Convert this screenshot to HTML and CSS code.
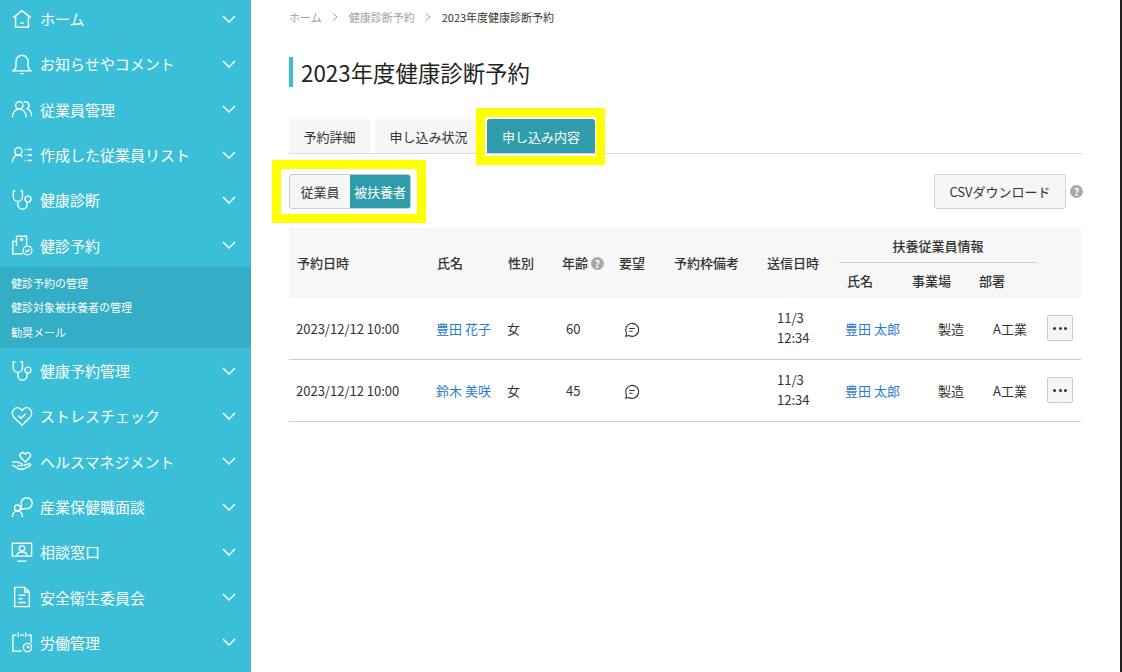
FILE: index.html
```html
<!DOCTYPE html>
<html lang="ja">
<head>
    <meta charset="UTF-8">
    <title>2023年度健康診断予約</title>
    <link rel="stylesheet" href="styles.css">
</head>
<body>
    <div class="app">
        <nav class="sidebar">
            <a class="nav-item">
                <svg class="nav-icon" viewBox="0 0 24 24"><path d="M2.500 10.500 12 3l9.500 7.500M5 9v12h14V9M10 16.500h4"/></svg>
                <span>ホーム</span>
                <svg class="chevron" viewBox="0 0 14 8"><path d="M1 1l6 6 6-6"/></svg>
            </a>
            <a class="nav-item">
                <svg class="nav-icon" viewBox="0 0 24 24"><path d="M2.500 19.500c2-1.500 3-3 3-6V9a6.500 6.500 0 0 1 13 0v4.500c0 3 1 4.500 3 6zM10 22.500h4"/></svg>
                <span>お知らせやコメント</span>
                <svg class="chevron" viewBox="0 0 14 8"><path d="M1 1l6 6 6-6"/></svg>
            </a>
            <a class="nav-item">
                <svg class="nav-icon" viewBox="0 0 24 24"><circle cx="9" cy="8" r="4"/><path d="M1.500 21c0-5 3-9 7.500-9s7.500 4 7.500 9M14 4.500a3.700 3.700 0 1 1 3.500 7c3 1 5 4.500 5 8.500"/></svg>
                <span>従業員管理</span>
                <svg class="chevron" viewBox="0 0 14 8"><path d="M1 1l6 6 6-6"/></svg>
            </a>
            <a class="nav-item">
                <svg class="nav-icon" viewBox="0 0 24 24"><circle cx="8" cy="8" r="4"/><path d="M1.500 20c0-4.500 2.500-8 6.500-8 2 0 3.500.8 4.500 2M15 6h1M18 6h5M15 12h1M18 12h5M15 18h1M18 18h5"/></svg>
                <span>作成した従業員リスト</span>
                <svg class="chevron" viewBox="0 0 14 8"><path d="M1 1l6 6 6-6"/></svg>
            </a>
            <a class="nav-item">
                <svg class="nav-icon" viewBox="0 0 24 24"><path d="M5 2H2.500v6.500c0 3 2.500 5 5 5s5-2 5-5V2H10M7.500 13.500V17a5 5 0 0 0 10 0v-2.500"/><circle cx="18.500" cy="11" r="3.200"/></svg>
                <span>健康診断</span>
                <svg class="chevron" viewBox="0 0 14 8"><path d="M1 1l6 6 6-6"/></svg>
            </a>
            <a class="nav-item">
                <svg class="nav-icon" viewBox="0 0 24 24"><path d="M12.500 21.500H2V8h4V2.500h11V12M6 8v5M9.500 6h4M11.500 4v4M4.500 13h.1M4.500 17h.1M9 12h.1M9 16h.1"/><circle cx="18" cy="18" r="4.800"/><path d="M15.800 18l1.600 1.600 2.800-3"/></svg>
                <span>健診予約</span>
                <svg class="chevron" viewBox="0 0 14 8"><path d="M1 1l6 6 6-6"/></svg>
            </a>
            <div class="subnav">
                <a>健診予約の管理</a>
                <a>健診対象被扶養者の管理</a>
                <a>勧奨メール</a>
            </div>
            <a class="nav-item">
                <svg class="nav-icon" viewBox="0 0 24 24"><path d="M5 2H2.500v6.500c0 3 2.500 5 5 5s5-2 5-5V2H10M7.500 13.500V17a5 5 0 0 0 10 0v-2.500"/><circle cx="18.500" cy="11" r="3.200"/></svg>
                <span>健康予約管理</span>
                <svg class="chevron" viewBox="0 0 14 8"><path d="M1 1l6 6 6-6"/></svg>
            </a>
            <a class="nav-item">
                <svg class="nav-icon" viewBox="0 0 24 24"><path d="M12 22 3 13C-1 8 4 1 9 3.500c1.500.7 2.300 1.700 3 2.700.7-1 1.500-2 3-2.700C20 1 25 8 21 13z"/><path d="M8 11.500l3 3 5-5"/></svg>
                <span>ストレスチェック</span>
                <svg class="chevron" viewBox="0 0 14 8"><path d="M1 1l6 6 6-6"/></svg>
            </a>
            <a class="nav-item">
                <svg class="nav-icon" viewBox="0 0 24 24"><path d="M15.500 13 10.500 8c-2.500-3 1.500-6.500 4-4.500l1 1 1-1c2.500-2 6.500 1.500 4 4.500zM1 13h5l5 1.500c1.500.5 1 2.500-.5 2.500H7M1 17h2l6 4h4l8-4c1-1 0-2.500-1.500-2L13 17"/></svg>
                <span>ヘルスマネジメント</span>
                <svg class="chevron" viewBox="0 0 14 8"><path d="M1 1l6 6 6-6"/></svg>
            </a>
            <a class="nav-item">
                <svg class="nav-icon" viewBox="0 0 24 24"><circle cx="7" cy="13" r="3.200"/><path d="M1.500 23c0-4 2-6.500 5.500-6.500s5.500 2.500 5.500 6.500M11.500 10A6 6 0 1 1 15 13.500l-4 1.500z"/><path d="M14.500 8h.1M17 8h.1M19.500 8h.1"/></svg>
                <span>産業保健職面談</span>
                <svg class="chevron" viewBox="0 0 14 8"><path d="M1 1l6 6 6-6"/></svg>
            </a>
            <a class="nav-item">
                <svg class="nav-icon" viewBox="0 0 24 24"><path d="M1.500 2.500h21v14h-21zM7 22h10"/><circle cx="12" cy="8" r="3"/><path d="M6.500 16.500c0-3 2.500-4.500 5.500-4.500s5.500 1.500 5.500 4.500"/></svg>
                <span>相談窓口</span>
                <svg class="chevron" viewBox="0 0 14 8"><path d="M1 1l6 6 6-6"/></svg>
            </a>
            <a class="nav-item">
                <svg class="nav-icon" viewBox="0 0 24 24"><path d="M4 1.500h11l5 5v16H4zM15 1.500v5h5M8 10h8M8 14h5M8 18h8"/></svg>
                <span>安全衛生委員会</span>
                <svg class="chevron" viewBox="0 0 14 8"><path d="M1 1l6 6 6-6"/></svg>
            </a>
            <a class="nav-item">
                <svg class="nav-icon" viewBox="0 0 24 24"><path d="M12 22H2V4.500h4M10 4.500h4M18 4.500h4V13M8 1.500v5M16 1.500v5"/><circle cx="18" cy="18" r="4.500"/><path d="M18 15.500V18h2.500"/></svg>
                <span>労働管理</span>
                <svg class="chevron" viewBox="0 0 14 8"><path d="M1 1l6 6 6-6"/></svg>
            </a>
        </nav>

        <main class="content">
            <div class="breadcrumb">
                <a>ホーム</a>
                <svg class="crumb-sep" viewBox="0 0 6 8"><path d="M1 .5 5 4 1 7.500"/></svg>
                <a>健康診断予約</a>
                <svg class="crumb-sep" viewBox="0 0 6 8"><path d="M1 .5 5 4 1 7.500"/></svg>
                <span>2023年度健康診断予約</span>
            </div>
            <h1 class="page-title">2023年度健康診断予約</h1>

            <div class="tabs">
                <a class="tab">予約詳細</a>
                <a class="tab">申し込み状況</a>
                <a class="tab tab--active">申し込み内容</a>
            </div>

            <div class="toolbar">
                <div class="switch">
                    <a class="switch__btn">従業員</a>
                    <a class="switch__btn switch__btn--on">被扶養者</a>
                </div>
                <div class="toolbar__right">
                    <button class="csv-btn">CSVダウンロード</button>
                    <span class="help help--big">?</span>
                </div>
            </div>

            <table class="list">
                <colgroup>
                    <col class="c-date"><col class="c-name"><col class="c-sex"><col class="c-age"><col class="c-req">
                    <col class="c-note"><col class="c-sent"><col class="c-ename"><col class="c-site"><col class="c-dept"><col class="c-more">
                </colgroup>
                <thead>
                    <tr class="head-top">
                        <th rowspan="2" class="span-th">予約日時</th>
                        <th rowspan="2" class="span-th">氏名</th>
                        <th rowspan="2" class="span-th">性別</th>
                        <th rowspan="2" class="span-th">年齢 <span class="help">?</span></th>
                        <th rowspan="2" class="span-th">要望</th>
                        <th rowspan="2" class="span-th">予約枠備考</th>
                        <th rowspan="2" class="span-th">送信日時</th>
                        <th colspan="3" class="group">扶養従業員情報</th>
                        <th rowspan="2"></th>
                    </tr>
                    <tr class="head-sub">
                        <th>氏名</th>
                        <th>事業場</th>
                        <th>部署</th>
                    </tr>
                </thead>
                <tbody>
                    <tr>
                        <td>2023/12/12 10:00</td>
                        <td><a class="link">豊田 花子</a></td>
                        <td>女</td>
                        <td class="num">60</td>
                        <td class="req"><svg class="comment" viewBox="0 0 16 16"><path d="M1.700 14.300l.9-3A6.500 6.500 0 1 1 4.900 13.500zM5.200 6.500h5.600M5.200 9.200h3.400"/></svg></td>
                        <td></td>
                        <td class="sent">11/3<br>12:34</td>
                        <td class="ename"><a class="link">豊田 太郎</a></td>
                        <td class="site">製造</td>
                        <td class="dept">A工業</td>
                        <td class="more"><button class="more-btn"><b></b><b></b><b></b></button></td>
                    </tr>
                    <tr>
                        <td>2023/12/12 10:00</td>
                        <td><a class="link">鈴木 美咲</a></td>
                        <td>女</td>
                        <td class="num">45</td>
                        <td class="req"><svg class="comment" viewBox="0 0 16 16"><path d="M1.700 14.300l.9-3A6.500 6.500 0 1 1 4.900 13.500zM5.200 6.500h5.600M5.200 9.200h3.400"/></svg></td>
                        <td></td>
                        <td class="sent">11/3<br>12:34</td>
                        <td class="ename"><a class="link">豊田 太郎</a></td>
                        <td class="site">製造</td>
                        <td class="dept">A工業</td>
                        <td class="more"><button class="more-btn"><b></b><b></b><b></b></button></td>
                    </tr>
                </tbody>
            </table>
        </main>
    </div>
</body>
</html>
```

FILE: styles.css
```css
* {
    box-sizing: border-box;
}

html, body {
    height: 100%;
}

body {
    margin: 0;
    background: #fff;
    color: #333;
    font-family: "Noto Sans CJK JP", "Noto Sans", sans-serif;
    overflow: hidden;
}

.app {
    display: flex;
    height: 672px;
    border-right: 2px solid #222;
}

/* sidebar */
.sidebar {
    width: 251px;
    flex: none;
    background: #3bbfd9;
    color: #fff;
    overflow: hidden;
}

.nav-item {
    display: flex;
    align-items: center;
    height: 45.3px;
    padding: 0 15px 0 11px;
    font-size: 15px;
}

.nav-item:first-child {
    margin-top: -4px;
}

.nav-item span {
    flex: 1;
    margin-left: 7px;
    white-space: nowrap;
}

.nav-icon {
    width: 22px;
    height: 22px;
    flex: none;
    fill: none;
    stroke: #fff;
    stroke-width: 1.500;
}

.chevron {
    width: 14px;
    height: 8px;
    flex: none;
    fill: none;
    stroke: #fff;
    stroke-width: 1.500;
}

.subnav {
    display: flex;
    flex-direction: column;
    height: 81px;
    margin-top: -0.800px;
    padding: 4px 0 0 11px;
    background: #33aec6;
    font-size: 11px;
}

.subnav a {
    height: 24.500px;
    line-height: 24.500px;
}

/* main */
.content {
    flex: 1;
    padding: 0 38px;
    min-width: 0;
}

.breadcrumb {
    display: flex;
    align-items: center;
    height: 34px;
    font-size: 11px;
    color: #a0a0a0;
}

.crumb-sep {
    width: 6px;
    height: 8px;
    margin: 0 10.500px;
    fill: none;
    stroke: #a0a0a0;
    stroke-width: 1;
}

.breadcrumb span {
    color: #333;
}

.page-title {
    margin: 23px 0 0;
    padding-left: 8px;
    border-left: 4px solid #3bbfd9;
    height: 30px;
    line-height: 30px;
    font-size: 22.400px;
    font-weight: 400;
    color: #222;
}

.tabs {
    display: flex;
    gap: 5px;
    margin-top: 32px;
    height: 35px;
    width: 794px;
    border-bottom: 1px solid #ddd;
}

.tab {
    display: flex;
    align-items: center;
    justify-content: center;
    width: 81px;
    height: 34px;
    background: #f6f6f6;
    border-radius: 3px 3px 0 0;
    font-size: 13px;
}

.tab:nth-child(2) {
    width: 107px;
}

.tab--active {
    position: relative;
    width: 108px;
    background: #2f9cab;
    color: #fff;
}

/* yellow note frames laid over the page */
.tab--active::after,
.switch::after {
    content: "";
    position: absolute;
    border: 9px solid #ffff00;
    pointer-events: none;
}

.tab--active::after {
    inset: -11px -10px -12px -11px;
}

.switch::after {
    inset: -15px -16px -15px -18px;
}

.toolbar {
    display: flex;
    justify-content: space-between;
    align-items: center;
    width: 794px;
    margin-top: 19px;
    height: 36px;
}

.switch {
    position: relative;
    display: flex;
    width: 122px;
    height: 35px;
    border: 1px solid #ccc;
    border-radius: 3px;
    background: #f6f6f6;
    font-size: 13px;
}

.switch__btn {
    display: flex;
    align-items: center;
    justify-content: center;
    flex: 1;
}

.switch__btn--on {
    flex: none;
    width: 60px;
    background: #2f9cab;
    color: #fff;
    border-radius: 0 2px 2px 0;
}

.toolbar__right {
    display: flex;
    align-items: center;
    gap: 4px;
}

.csv-btn {
    width: 132px;
    height: 35px;
    border: 1px solid #d4d4d4;
    border-radius: 3px;
    background: #f6f6f6;
    color: #333;
    font-family: inherit;
    font-size: 13px;
    padding: 0;
}

.help {
    display: inline-flex;
    align-items: center;
    justify-content: center;
    width: 13px;
    height: 13px;
    border-radius: 50%;
    background: #a9a9a9;
    color: #fff;
    font-size: 10px;
    font-weight: 700;
    vertical-align: 0;
}

/* table */
.list {
    width: 792px;
    margin-top: 19px;
    border-collapse: collapse;
    table-layout: fixed;
    font-size: 13px;
}

.c-date { width: 140px; }
.c-name { width: 71px; }
.c-sex { width: 54px; }
.c-age { width: 57px; }
.c-req { width: 55px; }
.c-note { width: 93px; }
.c-sent { width: 80px; }
.c-ename { width: 65px; }
.c-site { width: 67px; }
.c-dept { width: 66px; }
.c-more { width: 44px; }

.list th {
    padding: 0 0 0 8px;
    background: #f7f7f7;
    font-weight: 500;
    text-align: left;
    white-space: nowrap;
}

.list th.span-th {
    padding-bottom: 2px;
}

.head-top,
.head-sub {
    height: 35px;
}

.list th.group {
    padding: 0;
    text-align: center;
    background-image: linear-gradient(#ccc, #ccc);
    background-size: 198px 1px;
    background-position: left bottom;
    background-repeat: no-repeat;
}

.list td {
    height: 62px;
    padding: 0 0 0 7px;
    border-bottom: 1px solid #ccc;
    white-space: nowrap;
}

.list tbody tr:first-child td {
    height: 61px;
}

.link {
    color: #2a7ccf;
}

.list td.num {
    padding-left: 12px;
}

.list td.req {
    padding-left: 13px;
}

.comment {
    width: 16px;
    height: 16px;
    fill: none;
    stroke: #333;
    stroke-width: 1.100;
    vertical-align: middle;
}

.list td.sent {
    padding-left: 18px;
    line-height: 20px;
}

.list td.ename {
    padding-left: 6px;
}

.list td.site {
    padding-left: 34px;
}

.list td.dept {
    padding-left: 22px;
}

.list td.more {
    padding-left: 10px;
}

.more-btn {
    display: flex;
    align-items: center;
    justify-content: center;
    gap: 2.500px;
    width: 26px;
    height: 26px;
    padding: 0;
    border: 1px solid #ccc;
    border-radius: 2px;
    background: #f6f6f6;
}

.more-btn b {
    width: 3px;
    height: 3px;
    border-radius: 50%;
    background: #333;
}
```
